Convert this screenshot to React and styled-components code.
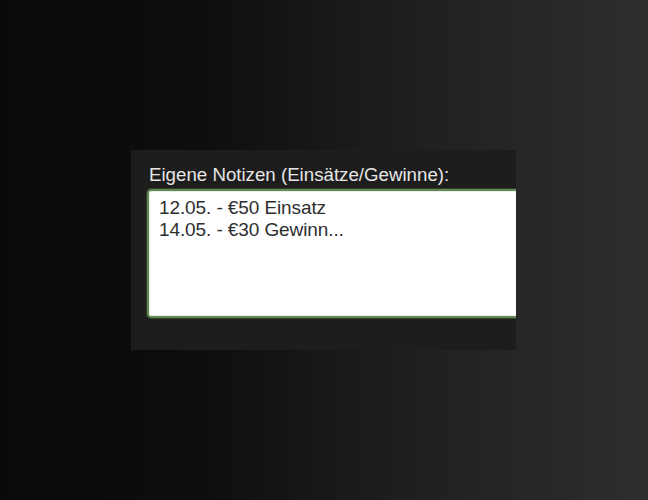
import React, { useState } from "react";
import styled, { createGlobalStyle } from "styled-components";

const Global = createGlobalStyle`
  html, body { margin: 0; padding: 0; }
  body {
    width: 648px;
    height: 500px;
    overflow: hidden;
    font-family: "Liberation Sans", Arial, sans-serif;
  }
`;

const Page = styled.div`
  width: 648px;
  height: 500px;
  background: linear-gradient(90deg, #0a0a0a 0%, #0d0d0d 30%, #202020 65%, #2e2e2e 100%);
  padding: 150px 0 0 131px;
  box-sizing: border-box;
`;

const Panel = styled.div`
  width: 385px;
  height: 200px;
  box-sizing: border-box;
  background: #1d1d1d;
  overflow: hidden;
  padding: 14px 0 0 16px;
`;

const Label = styled.label`
  display: block;
  color: #e6e6e6;
  font-size: 18.7px;
  line-height: 21px;
  margin: 0 0 4px 2px;
`;

const Notes = styled.textarea`
  display: block;
  width: 420px;
  height: 129px;
  box-sizing: border-box;
  resize: none;
  background: #fff;
  border: 2px solid #64865a;
  border-radius: 4px;
  outline: 1px solid #2c4424;
  box-shadow: inset 0 0 0 1px #e8efe4;
  padding: 6px 10px;
  color: #2e2e2e;
  caret-color: #333;
  font-family: "Liberation Sans", Arial, sans-serif;
  font-size: 19px;
  line-height: 22px;
  letter-spacing: -0.1px;
`;

export default function App() {
  const [notes, setNotes] = useState("12.05. - €50 Einsatz\n14.05. - €30 Gewinn...");

  return (
    <Page>
      <Global />
      <Panel>
        <Label htmlFor="notes">Eigene Notizen (Einsätze/Gewinne):</Label>
        <Notes id="notes" autoFocus value={notes} onChange={(e) => setNotes(e.target.value)} />
      </Panel>
    </Page>
  );
}
